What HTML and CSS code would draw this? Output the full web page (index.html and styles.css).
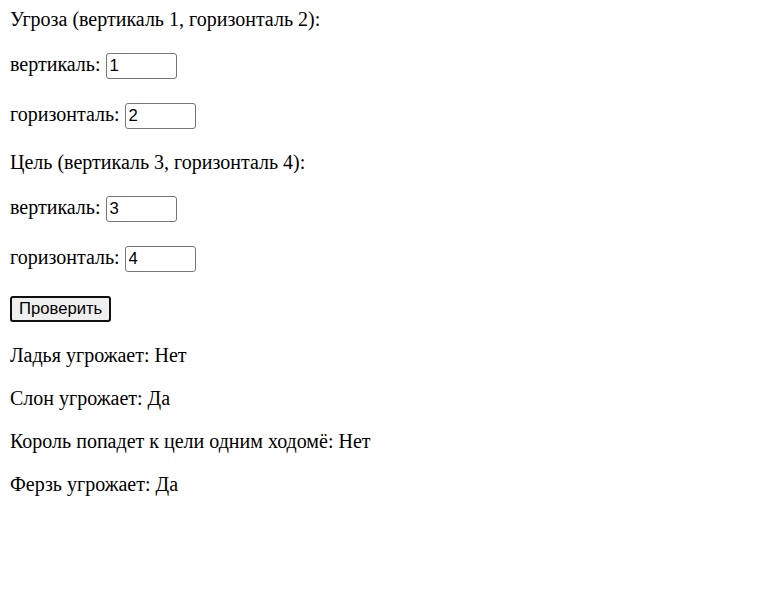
FILE: index.html
```html
<!DOCTYPE html>
<html lang="ru">
<head>
<meta charset="utf-8">
<title>Угроза</title>
<link rel="stylesheet" href="styles.css">
</head>
<body class="page">
  <p class="row row--first">Угроза (вертикаль 1, горизонталь 2):</p>
  <p class="row row--field">вертикаль: <input class="field" type="text" value="1"></p>
  <p class="row row--field">горизонталь: <input class="field" type="text" value="2"></p>
  <p class="row">Цель (вертикаль 3, горизонталь 4):</p>
  <p class="row row--field">вертикаль: <input class="field" type="text" value="3"></p>
  <p class="row row--field">горизонталь: <input class="field" type="text" value="4"></p>
  <p class="row row--field"><button class="btn" type="button">Проверить</button></p>
  <p class="row">Ладья угрожает: Нет</p>
  <p class="row">Слон угрожает: Да</p>
  <p class="row">Король попадет к цели одним ходомё: Нет</p>
  <p class="row">Ферзь угрожает: Да</p>
</body>
</html>
```

FILE: styles.css
```css
html, body {
  background: #ffffff;
}
.page {
  margin: 8px 10px 10px;
  font-family: "Liberation Serif", "Times New Roman", serif;
  font-size: 20px;
  color: #000000;
}
.row {
  margin: 20px 0;
}
.row--first {
  margin-top: 0;
}
.row--field {
  padding: 2px 0;
}
.field {
  box-sizing: border-box;
  width: 71px;
  height: 26px;
  padding: 1px 3px;
  border: 1px solid #767676;
  border-radius: 3px;
  font-family: "Liberation Sans", Arial, sans-serif;
  font-size: 16.67px;
  color: #000000;
  background: #ffffff;
  vertical-align: baseline;
}
.btn {
  box-sizing: border-box;
  height: 26px;
  padding: 1px 7px;
  border: 2px solid #101010;
  border-radius: 3px;
  background: #efefef;
  font-family: "Liberation Sans", Arial, sans-serif;
  font-size: 16.67px;
  color: #000000;
}
```
